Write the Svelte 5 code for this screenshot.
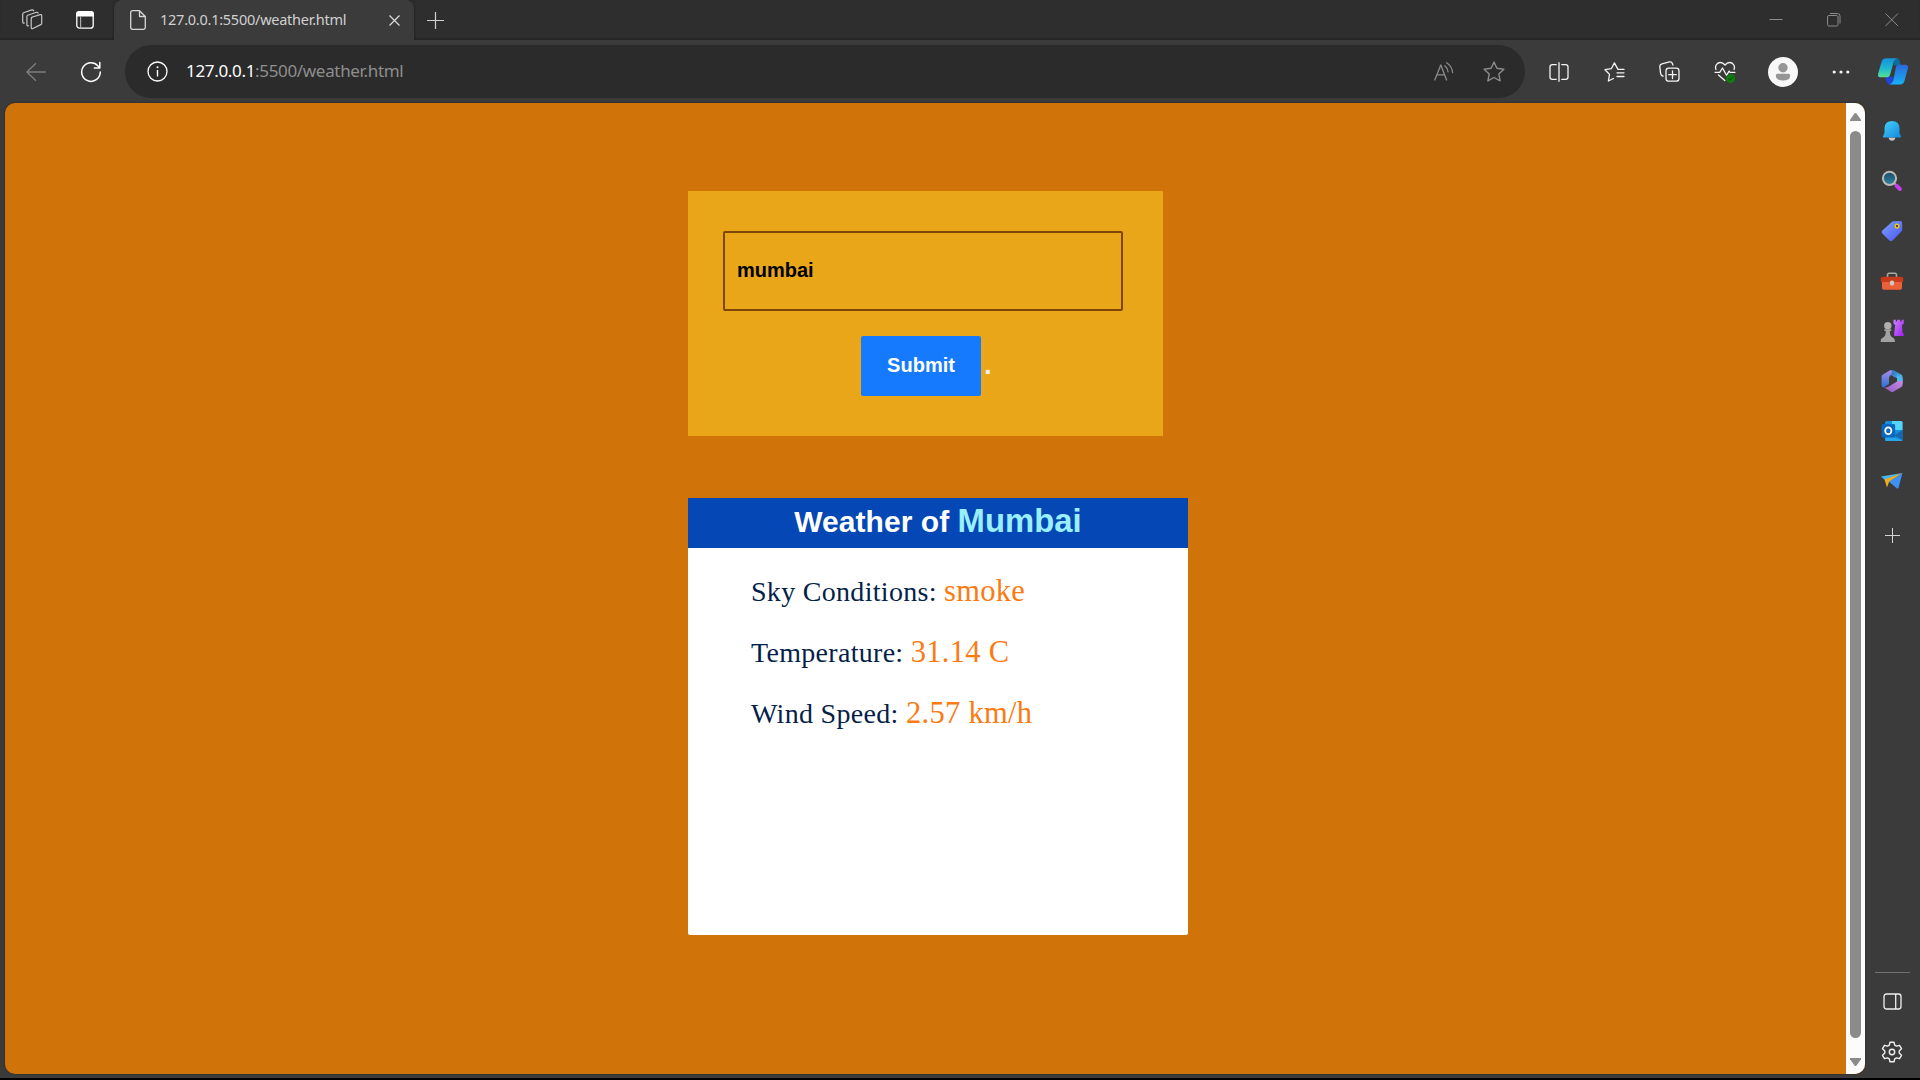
<script>
  const readings = [
    { label: 'Sky Conditions:', value: 'smoke' },
    { label: 'Temperature:', value: '31.14 C' },
    { label: 'Wind Speed:', value: '2.57 km/h' },
  ];
  let city = $state('mumbai');
</script>

<div class="browser">
  <header class="titlebar">
    <span class="cell workspaces">
      <svg width="22" height="22" viewBox="0 0 22 22" fill="none" stroke="#c6c6c6" stroke-width="1.2" stroke-linejoin="round" stroke-linecap="round">
        <path d="M10.6 8.2 19.2 5.6q1.5-.3 1.5 1.2v7.4q0 1-.9 1.4l-8 3.9q-1.6.6-1.6-1V9.8q0-1.1.9-1.4z" />
        <path d="M7.6 16.8q-1.7.6-1.7-1V7.8q0-1.1.9-1.5l8.6-3q1.3-.3 1.7.8M3.4 14q-1.7.5-1.7-1V5.2q0-1.1.9-1.5L10.8.9q1.3-.3 1.9.9" />
      </svg>
    </span>
    <span class="cell tabactions">
      <svg width="18" height="18" viewBox="0 0 18 18">
        <rect x=".8" y=".8" width="16.4" height="16.4" rx="2.8" fill="none" stroke="#fff" stroke-width="1.3" />
        <path d="M0 5.5V3q0-3 3-3h12q3 0 3 3v2.500z" fill="#fff" />
        <path d="M4.600 5v12" stroke="#aaa" stroke-width="1.2" />
      </svg>
    </span>
    <div class="tab">
      <svg class="file" width="16" height="20" viewBox="0 0 16 20" fill="none" stroke="#d6d6d6" stroke-width="1.3" stroke-linejoin="round">
        <path d="M2.500.7h7L15.300 6.500v11q0 1.800-1.800 1.800h-11Q.7 19.300.7 17.500v-15Q.7.7 2.500.7zM9.500.7v5.800h5.800" />
      </svg>
      <span class="tabtitle">127.0.0.1:5500/weather.html</span>
      <svg class="tabclose" width="11" height="11" viewBox="0 0 11 11" stroke="#d8d8d8" stroke-width="1.3"><path d="M.5.5l10 10M10.500.5l-10 10" /></svg>
    </div>
    <svg class="newtab" width="17" height="17" viewBox="0 0 17 17" stroke="#cfcfcf" stroke-width="1.200"><path d="M8.500 0v17M0 8.500h17" /></svg>
    <div class="winctl">
      <svg width="14" height="14" viewBox="0 0 14 14" stroke="#8b8b8b" stroke-width="1"><path d="M.5 6.500h13" /></svg>
      <svg width="14" height="14" viewBox="0 0 14 14" fill="none" stroke="#8b8b8b"><rect x=".5" y="2.500" width="10.500" height="10.500" rx="1.500" /><path d="M3 .5h7.500q2.500 0 2.500 2.500v7.500" /></svg>
      <svg width="14" height="14" viewBox="0 0 14 14" stroke="#8b8b8b"><path d="M.5.5l12.500 12.500M13 .5.5 13" /></svg>
    </div>
  </header>

  <div class="toolbar">
    <span class="nav">
      <svg width="20" height="18" viewBox="0 0 20 18" fill="none" stroke="#7f7f7f" stroke-width="1.300" stroke-linecap="round" stroke-linejoin="round"><path d="M9.500.7.8 9l8.700 8.300M.8 9h18.500" /></svg>
    </span>
    <span class="nav">
      <svg width="22" height="22" viewBox="0 0 22 22" fill="none" stroke="#fff" stroke-width="1.500" stroke-linecap="round" stroke-linejoin="round"><path d="M20.300 11A9.300 9.300 0 1 1 17.800 4.700L19.800 7M19.800 1.500V7h-5.500" /></svg>
    </span>
    <div class="address">
      <svg class="info" width="21" height="21" viewBox="0 0 21 21" fill="none" stroke="#fff" stroke-width="1.300"><circle cx="10.500" cy="10.500" r="9.500" /><path d="M10.500 9v6.500" stroke-width="1.400" /><circle cx="10.500" cy="6.200" r="1" fill="#fff" stroke="none" /></svg>
      <span class="url"><b>127.0.0.1</b>:5500/weather.html</span>
      <svg class="read" width="20" height="19" viewBox="0 0 20 19" fill="none" stroke="#8c8c8c" stroke-width="1.300" stroke-linecap="round" stroke-linejoin="round"><path d="M.8 18 6.800 3 12.600 18M2.900 12.800h7.600" /><path d="M10.800 3.800q2.900 2.200 3.200 6M12.600.8q5.300 3.200 6 9.700" /></svg>
      <svg class="fav" width="22" height="21" viewBox="0 0 22 21" fill="none" stroke="#8c8c8c" stroke-width="1.400" stroke-linejoin="round"><path d="M11 1.100 13.900 7.300 20.900 8.200 15.800 12.900 17.100 19.900 11 16.500 4.900 19.900 6.200 12.900 1.100 8.200 8.100 7.300z" /></svg>
    </div>
    <div class="actions">
      <span>
        <svg width="20" height="20" viewBox="0 0 20 20" fill="none" stroke="#f4f4f4" stroke-width="1.300"><path d="M7.700 2.700H3.300Q1 2.700 1 5v10q0 2.300 2.300 2.300h4.400M12.300 2.700h4.400Q19 2.700 19 5v10q0 2.300-2.300 2.300h-4.400M10 .2v19.600" /></svg>
      </span>
      <span>
        <svg width="21" height="20" viewBox="0 0 21 20" fill="none" stroke="#f4f4f4" stroke-width="1.300" stroke-linejoin="round" stroke-linecap="round"><path d="M20 7.400h-6L10.400.9 7.300 6.700 1 7.700l4.500 4.700L4.400 19l5-2.500M13 10.800h7M13 14.500h7" /></svg>
      </span>
      <span>
        <svg width="21" height="21" viewBox="0 0 21 21" fill="none" stroke="#f4f4f4" stroke-width="1.300" stroke-linejoin="round" stroke-linecap="round"><rect x="7" y="7.200" width="13" height="13" rx="2.800" /><path d="M13.500 10v7.500M9.800 13.700h7.500M4 15.200Q2 14.300 1.600 12.300L.8 5.600Q.7 3.300 2.900 2.800L10.400.9q2.300-.4 3 1.600l.5 1.600" /></svg>
      </span>
      <span>
        <svg width="22" height="22" viewBox="0 0 22 22" fill="none" stroke="#f4f4f4" stroke-width="1.300" stroke-linejoin="round" stroke-linecap="round"><path d="M2 8.500Q.5 4.800 3.500 2.400 7.500 0 11 4q3.500-4 7.500-1.600 3 2.400 1.500 6.100M1 11.300h4.700L8.500 7l4 7.300 2.600-4.200 1 1.200H21M4.500 14l6.300 5.500" /><circle cx="16.600" cy="17.500" r="4.500" fill="#107c10" stroke="none" /><path d="M14.500 17.500l1.500 1.500 2.800-2.800" stroke="#07500a" stroke-width="1" /></svg>
      </span>
      <span class="wide">
        <svg width="30" height="30" viewBox="0 0 30 30"><circle cx="15" cy="15" r="15" fill="#f8f8f8" /><circle cx="15" cy="10.800" r="4.700" fill="#969696" /><path d="M9.500 16.800h11q1.700 0 1.700 1.500 0 5.300-7.200 5.300t-7.200-5.300q0-1.500 1.700-1.500z" fill="#969696" /></svg>
      </span>
      <span>
        <svg width="18" height="4" viewBox="0 0 18 4" fill="#f4f4f4"><circle cx="2.200" cy="2" r="1.600" /><circle cx="9" cy="2" r="1.600" /><circle cx="15.800" cy="2" r="1.600" /></svg>
      </span>
      <span class="last">
        <svg width="30" height="27" viewBox="0 0 30 27">
          <defs>
            <linearGradient id="copA" x1="0" y1="0" x2="0" y2="1"><stop offset="0" stop-color="#1590d8" /><stop offset=".55" stop-color="#1dbbd0" /><stop offset="1" stop-color="#59e08f" /></linearGradient>
            <linearGradient id="copB" x1="0" y1="0" x2="0" y2="1"><stop offset="0" stop-color="#2a68dc" /><stop offset="1" stop-color="#16b2f5" /></linearGradient>
          </defs>
          <path d="M15 .3h3.800q2 0 2.700 2.400L22.600 7.500H16z" fill="#0c6c9c" />
          <path d="M7 18.500h8l1.500 8h-4.500q-2.500 0-3.300-2.500z" fill="#2143d8" />
          <path d="M8 .3h11.500q-3 .5-4 4L12.300 16q-.8 3.300-3.500 3.300H2.500q-3.300 0-2.300-4L3.500 4Q4.600.3 8 .3z" fill="url(#copA)" />
          <path d="M20.500 6.800h7q3.300 0 2.300 4l-3.300 12Q25.500 26.600 22 26.600H11.500q2.800-.6 3.800-4l2.500-12.500q.7-3.300 2.700-3.300z" fill="url(#copB)" />
        </svg>
      </span>
    </div>
  </div>

  <div class="body">
    <main class="page">
      <div class="content">
        <form class="search" onsubmit={(e) => e.preventDefault()}>
          <input type="text" bind:value={city} />
          <div class="row"><button type="submit">Submit</button><span class="dot">.</span></div>
        </form>
        <section class="card">
          <h1>Weather of <span>Mumbai</span></h1>
          <div class="readings">
            {#each readings as r}
              <p>{r.label} <span>{r.value}</span></p>
            {/each}
          </div>
        </section>
      </div>
      <div class="scroll">
        <svg width="11" height="8" viewBox="0 0 11 8"><path d="M4.500.6q1-1 2 0L11 6.700V8H0V6.700z" fill="#8b8b8b" /></svg>
        <div class="thumb"></div>
        <svg width="11" height="8" viewBox="0 0 11 8"><path d="M4.500 7.400q1 1 2 0L11 1.300V0H0v1.300z" fill="#8b8b8b" /></svg>
      </div>
    </main>

    <aside class="sidebar">
      <span>
        <svg width="20" height="22" viewBox="0 0 20 22"><defs><linearGradient id="bell" x1="0" y1="0" x2="1" y2="1"><stop offset="0" stop-color="#46d2fa" /><stop offset="1" stop-color="#1287dd" /></linearGradient></defs><path d="M6.500 17.500h7q-.8 3.300-3.500 3.300t-3.500-3.300z" fill="#c6c6c6" /><path d="M10 1q7 0 7.500 7v5l1.600 3.400q.3 1-.7 1H1.600q-1 0-.7-1L2.500 13V8Q3 1 10 1z" fill="url(#bell)" /></svg>
      </span>
      <span>
        <svg width="22" height="22" viewBox="0 0 22 22"><defs><linearGradient id="lens" x1="0" y1="0" x2="0" y2="1"><stop offset="0" stop-color="#1c4966" /><stop offset="1" stop-color="#2d84a5" /></linearGradient></defs><path d="M13 13l3 3" stroke="#aaa" stroke-width="2" /><path d="M15.700 15.900l3.200 3.100" stroke="#c63df0" stroke-width="4" stroke-linecap="round" /><circle cx="8.500" cy="8.300" r="6.600" fill="url(#lens)" stroke="#bdb9b5" stroke-width="2" /></svg>
      </span>
      <span>
        <svg width="22" height="22" viewBox="0 0 22 22"><defs><linearGradient id="tag" x1="0" y1="0" x2="1" y2="1"><stop offset="0" stop-color="#7ba7ff" /><stop offset="1" stop-color="#4b50ee" /></linearGradient></defs><path d="M12.500 1.200 19 1q2.200 0 2.200 2.200v6.500q0 1-.8 1.800l-8.800 8.900q-1.600 1.500-3.200 0L1.300 13.500q-1.200-1.500 0-2.900l9.500-8.700q.7-.7 1.700-.7z" fill="url(#tag)" /><circle cx="16" cy="6.100" r="1.900" fill="#363a50" stroke="#ecc516" stroke-width="1.500" /></svg>
      </span>
      <span>
        <svg width="24" height="18" viewBox="0 0 24 18"><path d="M7.500 5V3q0-1.700 1.700-1.700h5.600q1.700 0 1.700 1.700v2" fill="none" stroke="#aaa7a4" stroke-width="1.600" /><path d="M2 8h20v8q0 1.700-1.700 1.700H3.700Q2 17.700 2 16z" fill="#ea6038" /><path d="M2.600 4.800h18.800q1.800 0 1.800 1.700V9q0 1-1 1H1.800q-1 0-1-1V6.500q0-1.700 1.800-1.700z" fill="#c93a1a" /><rect x="10" y="8.500" width="4" height="5" rx="1.500" fill="#c8c8c5" /></svg>
      </span>
      <span>
        <svg width="24" height="24" viewBox="0 0 24 24"><defs><linearGradient id="rook" x1="0" y1="0" x2="1" y2="1"><stop offset="0" stop-color="#c884ff" /><stop offset="1" stop-color="#a21ef0" /></linearGradient></defs><path d="M13.500.8h2.200v1.700h1.500V.8h3v1.700h1.500V.8h2.100v3.700L22 6.300l.5 7.200 1.300 1.700V17h-9.600v-3l1-7.700-1.700-1.800z" fill="url(#rook)" /><circle cx="7.800" cy="6.700" r="3.700" fill="#b0afae" /><path d="M4.300 10.200h7v1.900H9.800q0 4.500 2 5.900l2.300 1.500q1 1 .8 3.500H.7q-.2-2.500.8-3.500L3.800 18q2-1.400 2-5.900H4.300z" fill="#a3a2a1" /></svg>
      </span>
      <span>
        <svg width="22" height="24" viewBox="0 0 22 24"><defs><linearGradient id="msL" x1="0" y1="0" x2="0" y2="1"><stop offset="0" stop-color="#a98ae3" /><stop offset="1" stop-color="#2875d8" /></linearGradient><linearGradient id="msR" x1="0" y1="0" x2="1" y2="1"><stop offset="0" stop-color="#2860b9" /><stop offset="1" stop-color="#5bd1f5" /></linearGradient><linearGradient id="msB" x1="0" y1="1" x2="1" y2="0"><stop offset="0" stop-color="#9159bd" /><stop offset="1" stop-color="#cb91ea" /></linearGradient></defs><path d="M8.500 1.800 10 1q1.200-.5 2.300 0l8 4.600q1.200.8 1.200 2V15l-5.500-3V9.300L9.500 6z" fill="url(#msR)" /><path d="M9 1.300Q11 1 11.500 3L8 8.600V15l-6 3.500Q.6 17.700.6 16V7.600q0-1.300 1-1.900z" fill="url(#msL)" /><path d="M21.500 11v5q0 1.300-1.200 2l-8 4.700q-1.100.6-2.300 0l-7.600-4.600Q5 19 7.800 17.400L16 12.500V9q5 0 5.500 2z" fill="url(#msB)" /><path d="M16 6l5.500 3v3L16 12z" fill="#4bb7ef" /></svg>
      </span>
      <span>
        <svg width="22" height="22" viewBox="0 0 22 22"><rect x="4" y="1" width="17.500" height="20" rx="1.500" fill="#1490df" /><path d="M11 1h9q1.500 0 1.500 1.500V10H11z" fill="#55d5fa" /><path d="M21.500 10v10l-8-4.500z" fill="#1566ad" /><path d="M4 15l17.500 5.500Q21 21 20 21H5.500Q4 21 4 19.500z" fill="#27a7ea" /><rect x=".6" y="4" width="13.500" height="13.500" rx="1.400" fill="#0967bf" /><ellipse cx="7.300" cy="10.700" rx="3.100" ry="3.400" fill="none" stroke="#fff" stroke-width="1.800" /></svg>
      </span>
      <span>
        <svg width="24" height="18" viewBox="0 0 24 18"><path d="M1 4.500 22.500 1 5.500 8.500z" fill="#49b6ed" /><path d="M4.500 7.500 22.500 1 9 10 7 15.500z" fill="#f3ad19" /><path d="M22.500 1 9 9.800 17 16.500q1 .4 1.500-.8z" fill="#3d91f4" /></svg>
      </span>
      <span class="add">
        <svg width="15" height="15" viewBox="0 0 15 15" stroke="#d5d5d5" stroke-width="1"><path d="M7.500 0v15M0 7.500h15" /></svg>
      </span>
      <hr />
      <span class="panel">
        <svg width="19" height="17" viewBox="0 0 19 17" fill="none" stroke="#f0f0f0" stroke-width="1.300"><rect x="1" y="1" width="17" height="15" rx="2.500" /><path d="M12.700 1v15" /></svg>
      </span>
      <span class="settings">
        <svg width="22" height="22" viewBox="0 0 22 22" fill="none" stroke="#f0f0f0" stroke-width="1.400" stroke-linejoin="round"><circle cx="11" cy="11" r="2.700" /><path d="M9 1.200h4l.7 3 1.800 1 3-.9 2 3.400-2.300 2.200v2.200l2.300 2.200-2 3.400-3-.9-1.800 1-.7 3H9l-.7-3-1.800-1-3 .9-2-3.400 2.300-2.200V9.900L1.500 7.700l2-3.400 3 .9 1.800-1z" /></svg>
      </span>
    </aside>
  </div>
</div>

<style>
  :global(body) { margin: 0; background: #000; overflow: hidden; }
  * { box-sizing: border-box; }
  svg { display: block; flex: none; }
  .browser { width: 1920px; height: 1078px; background: #3b3b3b; display: flex; flex-direction: column; font-family: "Noto Sans", sans-serif; }
  .titlebar { height: 40px; flex: none; display: flex; align-items: center; background: #2e2e2e; box-shadow: inset 0 -2px 2px -1px #222; }
  .cell { display: flex; justify-content: center; }
  .workspaces { width: 64px; }
  .tabactions { width: 42px; }
  .tab { width: 300px; height: 40px; margin-left: 8px; padding: 0 14px 0 16px; background: #3b3b3b; border-radius: 8px 8px 0 0; display: flex; align-items: center; box-shadow: 0 0 3px #1c1c1c; clip-path: inset(0 -4px 0 -4px); }
  .tabtitle { margin: -2px auto 0 14px; font-size: 14.500px; color: #d0d0d0; white-space: nowrap; letter-spacing: -0.25px; }
  .newtab { margin-left: 13px; }
  .winctl { margin-left: auto; padding-right: 21px; display: flex; gap: 44px; }

  .toolbar { height: 63px; flex: none; display: flex; align-items: center; padding-left: 8px; }
  .nav { width: 55px; flex: none; display: flex; justify-content: center; }
  .address { width: 1400px; flex: none; height: 53px; margin-left: 7px; border-radius: 27px; background: #2b2b2b; display: flex; align-items: center; padding: 0 20px 0 22px; }
  .url { margin: -2px auto 0 18px; font-size: 17px; color: #8e8e8e; white-space: nowrap; letter-spacing: -0.33px; }
  .url b { font-weight: 400; color: #fff; }
  .fav { margin-left: 29px; }
  .actions { display: flex; margin-left: 6px; }
  .actions span { width: 55.500px; flex: none; display: flex; align-items: center; justify-content: center; }
  .actions .wide { width: 60px; }
  .actions .last { width: 49px; }

  .body { display: flex; flex: 1; }
  .page { width: 1860px; height: 971px; margin-left: 5px; display: flex; border-radius: 10px; overflow: hidden; background: #d0740a; box-shadow: 0 0 2px #222; }
  .content { flex: 1; padding: 88px 0 0 683px; }
  .search { width: 475px; height: 245px; padding: 40px 35px; background: #e8a618; display: flex; flex-direction: column; }
  .search input { width: 400px; height: 80px; border: 2px solid #7d4605; border-radius: 2px; padding: 0 12px 2px; background: transparent; outline: none; color: #000; font: bold 20px "Liberation Sans", Arial, sans-serif; }
  .row { display: flex; margin: 25px 0 0 138px; }
  .row button { width: 120px; height: 60px; padding: 0 0 1px; border: 0; border-radius: 2px; background: #157afd; color: #fff; font: bold 20px "Liberation Sans", Arial, sans-serif; }
  .dot { margin-left: 3px; color: #eee; font: bold 28px/76px "Liberation Sans", Arial, sans-serif; height: 60px; margin-top: -9px; }
  .card { width: 500px; height: 437px; margin-top: 62px; background: #fff; border-radius: 0 0 2px 2px; }
  .card h1 { height: 50px; margin: 0; background: #0547b5; color: #fff; text-align: center; font: bold 30px/46px "Liberation Sans", Arial, sans-serif; letter-spacing: 0.05px; }
  .card h1 span { font-size: 32.800px; }
  .card h1 span { color: #9aefff; }
  .readings { padding: 13px 0 0 63px; }
  .readings p { margin: 0; height: 61px; line-height: 61px; font-family: "Liberation Serif", "Times New Roman", serif; font-size: 28px; color: #061f4a; letter-spacing: 0.3px; }
  .readings span { font-size: 30.500px; color: #fb7b12; }
  .scroll { width: 19px; background: #fcfcfc; display: flex; flex-direction: column; align-items: center; padding: 10px 0 8px; }
  .thumb { width: 11px; height: 907px; margin: 10px 0 auto; border-radius: 6px; background: #8b8b8b; }

  .sidebar { flex: 1; display: flex; flex-direction: column; align-items: center; padding: 3px 1px 0 0; }
  .sidebar span { height: 50px; flex: none; display: flex; align-items: center; }
  .sidebar .add { margin-top: 4px; }
  .sidebar hr { width: 35px; height: 1px; margin: auto 0 3px; border: 0; background: #707070; }
  .sidebar .settings { height: 52px; }
</style>
